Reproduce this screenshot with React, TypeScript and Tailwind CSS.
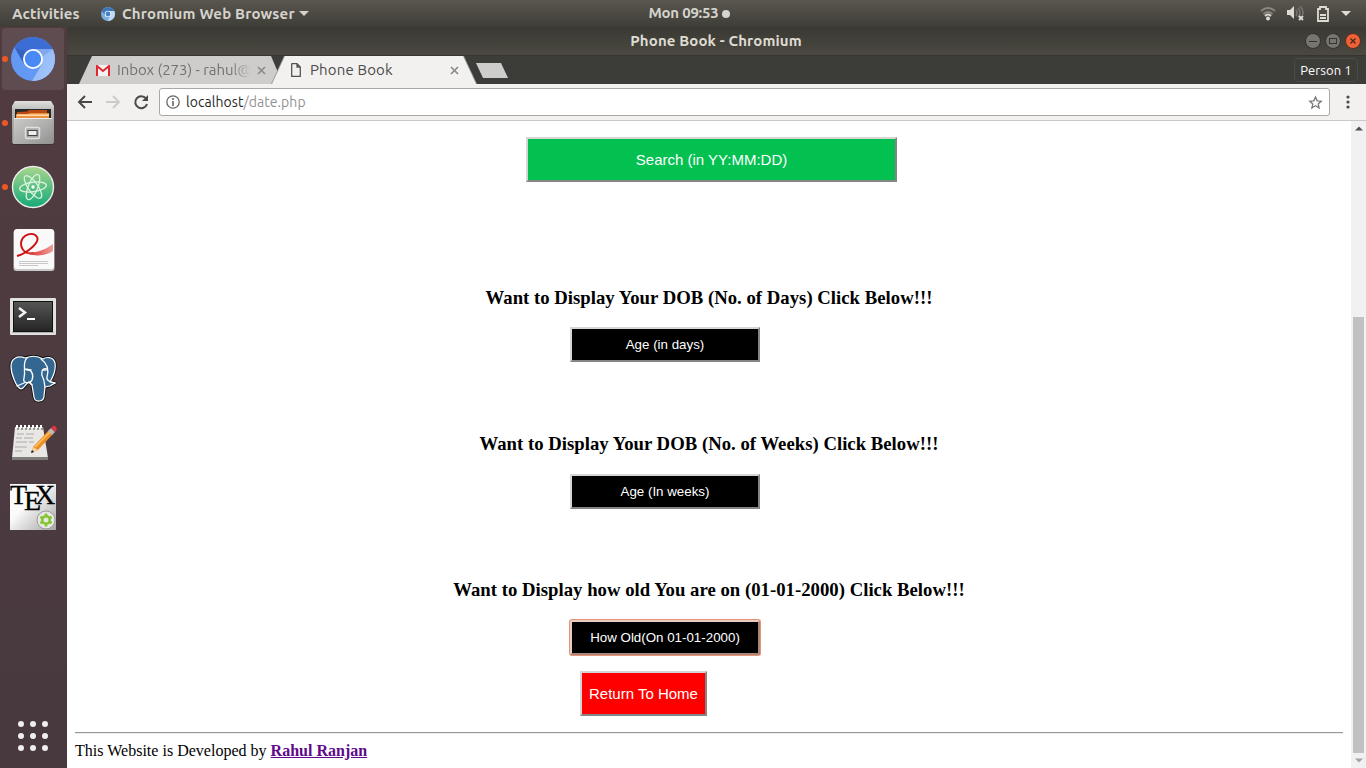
import type { ReactNode } from "react";

const uiFont = "font-['Ubuntu','Noto_Sans',sans-serif]";

function ChromiumIcon({ size }: { size: number }) {
  return (
    <svg width={size} height={size} viewBox="0 0 44 44" className="shrink-0">
      <defs>
        <clipPath id="disc"><circle cx="22" cy="22" r="22" /></clipPath>
        <linearGradient id="lightBlue" x1="0" y1="0" x2="1" y2="1">
          <stop offset="0" stopColor="#8db4f7" />
          <stop offset="1" stopColor="#a9c8fb" />
        </linearGradient>
      </defs>
      <g clipPath="url(#disc)">
        <rect width="44" height="44" fill="#6398f4" />
        <path d="M22 12H44V44H21L31 27Z" fill="url(#lightBlue)" />
        <path d="M0 0H44V12H22L13 27L3.5 10Z" fill="#3c6dd5" />
        <path d="M4 11L13 27L16 15Z" fill="#315cb7" opacity=".65" />
        <path d="M22 12H42L31 20Z" fill="#739be5" opacity=".6" />
      </g>
      <circle cx="22" cy="22" r="10" fill="white" />
      <circle cx="22" cy="22" r="8.2" fill="#4889f4" />
    </svg>
  );
}

function TopBarChromiumIcon() {
  return (
    <svg width="14" height="14" viewBox="0 0 14 14" className="shrink-0">
      <circle cx="7" cy="7" r="7" fill="#79aee0" />
      <path d="M.8 4A7 7 0 0 1 13.3 4H7L4.5 8.5Z" fill="#3d76b5" />
      <path d="M7 4H13.3A7 7 0 0 1 6.5 14L9.8 8.5Z" fill="#bdd9f3" />
      <circle cx="7" cy="7" r="3.3" fill="#e9f2fb" />
      <circle cx="7" cy="7" r="2.4" fill="#4482c4" />
    </svg>
  );
}

function FilesIcon() {
  return (
    <svg width="44" height="46" viewBox="0 0 44 46">
      <defs>
        <linearGradient id="cabinet" x1="0" y1="0" x2="0" y2="1">
          <stop offset="0" stopColor="#e1e1e0" /><stop offset=".25" stopColor="#b5b5b4" />
          <stop offset="1" stopColor="#8b8b89" />
        </linearGradient>
        <linearGradient id="drawer" x1="0" y1="0" x2="1" y2="1">
          <stop offset="0" stopColor="#cbcbc9" /><stop offset=".5" stopColor="#b0b0ae" /><stop offset="1" stopColor="#8f8f8d" />
        </linearGradient>
      </defs>
      <path d="M4 0H40L43 5V42H1V5Z" fill="url(#cabinet)" />
      <path d="M4 8H40V19H4Z" fill="#242826" />
      <path d="M6 11L16 10.5L18 9H36V19H6Z" fill="#bc4b13" />
      <path d="M5 13H17L19 12H38V19H5Z" fill="#ed9040" />
      <path d="M6 14.2H38" stroke="#ffe2b0" strokeWidth="1.5" />
      <path d="M3 17H41L42 44H2Z" fill="url(#drawer)" />
      <path d="M3 17.5H41" stroke="#ededeb" />
      <rect x="14.5" y="26.5" width="14" height="11" rx="1.5" fill="#aaa" stroke="#e2e2e1" strokeWidth="1.4" />
      <rect x="17" y="29.5" width="9" height="5" fill="#ededed" stroke="#444" />
      <path d="M2 43.5H42" stroke="#3b3235" />
    </svg>
  );
}

function AtomIcon() {
  return (
    <svg width="44" height="44" viewBox="0 0 44 44">
      <defs><linearGradient id="atom" x1="0" y1="0" x2="0" y2="1"><stop stopColor="#a8d68c" /><stop offset="1" stopColor="#14a978" /></linearGradient></defs>
      <circle cx="22" cy="22" r="20.5" fill="url(#atom)" stroke="#ededed" strokeWidth="1.4" />
      <g fill="none" stroke="#d9f3e0" strokeWidth="1.3">
        <ellipse cx="22" cy="22" rx="13.5" ry="4.8" transform="rotate(-8 22 22)" />
        <ellipse cx="22" cy="22" rx="13.5" ry="4.8" transform="rotate(55 22 22)" />
        <ellipse cx="22" cy="22" rx="13.5" ry="4.8" transform="rotate(112 22 22)" />
      </g>
      <circle cx="22" cy="22" r="1.7" fill="white" />
    </svg>
  );
}

function PdfIcon() {
  return (
    <svg width="42" height="43" viewBox="0 0 42 43">
      <defs><linearGradient id="ribbon" x1="0" x2="1"><stop stopColor="#d62525" /><stop offset="1" stopColor="#f0a09b" /></linearGradient></defs>
      <rect x=".5" y="1" width="41" height="41" rx="3" fill="#c8c8c8" />
      <rect x="1" y="0" width="40" height="40" rx="3" fill="#f9f9f9" />
      <path d="M4 27C15 24 27 13 24 8C21 2 9 5 8 14C8 21 13 26 21 24" fill="none" stroke="#ce0d10" strokeWidth="1.9" />
      <path d="M13 24C23 24 32 21 40 15V22C33 27 22 28 13 24Z" fill="url(#ribbon)" />
      <path d="M6 32.5H35M6 34.5H35M6 36.5H25" stroke="#c8c8c8" />
    </svg>
  );
}

function TerminalIcon() {
  return (
    <svg width="46" height="38" viewBox="0 0 46 38">
      <defs><linearGradient id="screen" x1="0" y1="0" x2="0" y2="1"><stop stopColor="#555" /><stop offset="1" stopColor="#252525" /></linearGradient></defs>
      <rect x="0" y="0" width="46" height="37" rx="1" fill="#e1e1e0" />
      <path d="M1 35L4 33H42L45 35" fill="#b1b1b1" />
      <rect x="3.5" y="3.5" width="39" height="30" fill="url(#screen)" stroke="#101010" />
      <path d="M9 10L15 14.5L9 19" fill="none" stroke="#f4f4f4" strokeWidth="2.5" />
      <path d="M17 21H25" stroke="white" strokeWidth="2" />
    </svg>
  );
}

function PostgresIcon() {
  return (
    <svg width="48" height="48" viewBox="0 0 48 48" strokeLinejoin="round" strokeLinecap="round">
      <path d="M16 3C8 0 2 4 2 11C2 19 7 32 12 34C15 34 18 27 20 27L23 30L25 42C26 48 35 47 35 41L36 32L41 31L46 28L41 27C44 22 47 14 46 8C44 1 37 2 34 4C27 0 22 1 16 3Z" fill="#336791" stroke="#111" strokeWidth="3" />
      <path d="M16 3C8 0 2 4 2 11C2 19 7 32 12 34C15 34 18 27 20 27L23 30L25 42C26 48 35 47 35 41L36 32L41 31L46 28L41 27C44 22 47 14 46 8C44 1 37 2 34 4C27 0 22 1 16 3Z" fill="#336791" stroke="white" strokeWidth="1.2" />
      <path d="M18 3C13 7 17 15 15 23C13 29 21 29 23 25C25 20 23 14 16 14M32 4C39 9 40 15 38 22C37 26 42 27 46 28M38 14C32 12 32 19 34 23C36 27 35 29 36 32M15 28L8 31M20 27L23 30" fill="none" stroke="white" strokeWidth="1.3" />
      <path d="M18 15H22M34 15H37" stroke="white" strokeWidth="1.5" />
    </svg>
  );
}

function EditorIcon() {
  return (
    <svg width="46" height="38" viewBox="0 0 46 38">
      <path d="M4 4H32L37 35H1Z" fill="#e8e7e3" />
      <path d="M1 34H37V37H1Z" fill="#7e7d7a" />
      <path d="M7 3V7M11 3V7M15 3V7M19 3V7M23 3V7M27 3V7M31 3V7" stroke="#4a4848" />
      <path d="M6 2V5M10 2V5M14 2V5M18 2V5M22 2V5M26 2V5M30 2V5" stroke="#fff" strokeWidth="2" />
      <path d="M6 11H13M15 11H23M5 15H11M13 15H22M5 19H16M18 19H23M4 24H16M4 28H11" stroke="#aaa" />
      <path d="M20 30L22 24L38 7L42 11L27 27Z" fill="#ed8f24" />
      <path d="M24 24L39 9" stroke="#ffc66b" strokeWidth="1.5" />
      <path d="M20 30L22 24L27 27Z" fill="#f3d2a0" />
      <path d="M20 30L21 27L23 29Z" fill="#111" />
      <path d="M37 8L40 5L44 9L41 12Z" fill="#b9b9b9" />
      <path d="M40 5L42 3C44 2 47 5 45 8L44 9Z" fill="#de3541" />
    </svg>
  );
}

function TexIcon() {
  return (
    <span className="relative block h-[46px] w-[46px] bg-linear-to-br from-[#fafafa] from-40% to-[#a5a5a5] font-['Liberation_Serif',serif] text-[28px] leading-[20px] text-black [-webkit-text-stroke:0.3px_black]">
      <span className="absolute top-px left-0">T</span>
      <span className="absolute top-[7px] left-[14px]">E</span>
      <span className="absolute top-px left-[25px]">X</span>
      <svg className="absolute right-0 bottom-0" width="20" height="22" viewBox="0 0 20 22">
        <circle cx="10" cy="12" r="9" fill="#e7e7e5" stroke="#999" />
        <circle cx="10" cy="12" r="3.7" fill="none" stroke="#83c52b" strokeWidth="2.4" />
        <path d="M10 5.5V8M10 16V18.5M4.4 8.8L6.5 10M13.5 14L15.6 15.2M4.4 15.2L6.5 14M13.5 10L15.6 8.8" stroke="#83c52b" strokeWidth="2.6" />
      </svg>
    </span>
  );
}

function DockItem({ children, active = false, running = false, offset = "" }: { children: ReactNode; active?: boolean; running?: boolean; offset?: string }) {
  return (
    <div className="relative h-16 w-[67px] shrink-0">
      {active && <div className="absolute top-[1px] left-[2px] h-[62px] w-[62px] rounded-[4px] bg-[#5f4c51]" />}
      {running && <span className="absolute top-[29px] left-[2px] h-[6px] w-[6px] rounded-full bg-[#ee5825]" />}
      <div className={`relative flex h-16 w-[66px] items-center justify-center ${offset}`}>{children}</div>
    </div>
  );
}

function CloseMark() {
  return <svg width="9" height="9" viewBox="0 0 9 9" className="shrink-0"><path d="M1 1L8 8M8 1L1 8" stroke="#8c8b89" strokeWidth="1.7" /></svg>;
}

function TopBar() {
  return (
    <div className={`flex h-[27px] shrink-0 items-center bg-linear-to-b from-[#5a574e] to-[#3e3d37] text-[#d5d3cd] ${uiFont}`}>
      <div className="grid w-full grid-cols-3 items-center text-[15px] leading-[20px] font-bold">
        <div className="flex items-center whitespace-nowrap">
          <span className="ml-3 w-[89px] tracking-[0.1px]">Activities</span>
          <TopBarChromiumIcon />
          <span className="ml-[7px] w-[173px] tracking-[0.18px]">Chromium Web Browser</span>
          <svg className="ml-[4px]" width="10" height="6" viewBox="0 0 10 6"><path d="M0 0H10L5 5Z" fill="currentColor" /></svg>
        </div>
        <div className="flex items-center justify-center pl-[13px]">
          <span className="relative -top-px tracking-[-0.25px]">Mon 09:53</span>
          <span className="ml-[4px] h-[8px] w-[8px] rounded-full bg-[#d5d3cd]" />
        </div>
        <div className="flex items-center justify-end pr-[15px]">
          <svg width="16" height="15" viewBox="0 0 16 15"><path d="M1 5Q8 -1 15 5M3.5 8Q8 4 12.5 8" fill="none" stroke="#87857e" strokeWidth="1.8" /><path d="M5 10Q8 7 11 10" fill="none" stroke="#dedbd2" strokeWidth="1.8" /><circle cx="8" cy="12.5" r="2" fill="#dedbd2" /></svg>
          <svg className="ml-[11px]" width="18" height="15" viewBox="0 0 18 15"><path d="M0 4H3L7 0V13L3 9H0Z" fill="#dedbd2" /><path d="M9 4Q11 7 9 10M11 2Q15 7 11 11M13 0Q18 6 15 9" fill="none" stroke="#77756f" strokeWidth="1.5" /><path d="M12 10L16 14M16 10L12 14" stroke="#dedbd2" strokeWidth="1.8" /></svg>
          <svg className="ml-[12px]" width="12" height="16" viewBox="0 0 12 16"><path d="M1 3H3V1H9V3H11V15H1Z" fill="none" stroke="#dedbd2" strokeWidth="1.8" /><path d="M3 9H9M3 12H9" stroke="#dedbd2" strokeWidth="1.8" /></svg>
          <svg className="ml-[12px]" width="10" height="6" viewBox="0 0 10 6"><path d="M0 0H10L5 5Z" fill="#dedbd2" /></svg>
        </div>
      </div>
    </div>
  );
}

function BrowserHeader() {
  return (
    <>
      <div className={`grid h-[28px] shrink-0 grid-cols-[1fr_auto_1fr] items-center bg-linear-to-b from-[#3a3933] to-[#4a4841] text-[#dedbd2] ${uiFont}`}>
        <span />
        <span className="-ml-px text-[15px] leading-[20px] font-bold tracking-[0.12px]">Phone Book - Chromium</span>
        <div className="flex justify-end gap-[4px] pr-[5px]">
          <svg width="16" height="16" viewBox="0 0 16 16"><circle cx="8" cy="8" r="7.5" fill="#77756e" stroke="#33322e" /><path d="M4 8.5H12" stroke="#35342f" /></svg>
          <svg width="16" height="16" viewBox="0 0 16 16"><circle cx="8" cy="8" r="7.5" fill="#77756e" stroke="#33322e" /><rect x="4.5" y="5.5" width="7" height="5" fill="none" stroke="#35342f" /></svg>
          <svg width="16" height="16" viewBox="0 0 16 16"><circle cx="8" cy="8" r="7.5" fill="#ee6035" stroke="#572d1e" /><path d="M5.5 5.5L10.5 10.5M10.5 5.5L5.5 10.5" stroke="#482a20" strokeWidth="1.4" /></svg>
        </div>
      </div>
      <div className={`flex h-[29px] shrink-0 border-t border-[#353530] bg-[#3c3d39] ${uiFont}`}>
        <div className="ml-[12px] flex h-[28px] w-[204px] items-center bg-[#cecdcb] pl-[17px] text-[15px] text-[#72716f] [clip-path:polygon(13px_0,192px_0,204px_100%,0_100%)]">
          <svg className="shrink-0" width="14" height="11" viewBox="0 0 14 11"><path d="M0 0H14V11H0Z" fill="#f2f2f2" /><path d="M1 11V1L7 6L13 1V11" fill="none" stroke="#df2930" strokeWidth="2" /></svg>
          <span className="ml-[7px] w-[134px] overflow-hidden tracking-[-0.05px] whitespace-nowrap [mask-image:linear-gradient(to_right,black_85%,transparent_100%)]">Inbox (273) - rahul@</span>
          <span className="ml-[6px] flex"><CloseMark /></span>
        </div>
        <div className="z-1 -ml-[12px] h-[28px] w-[206px] bg-[#9c9b99] [clip-path:polygon(13px_0,193px_0,206px_100%,0_100%)]">
          <div className="flex h-[28px] items-center bg-[#f2f1f0] pl-[20px] text-[15px] text-[#4c4b49] [clip-path:polygon(14px_0,192px_0,205px_100%,1px_100%)]">
            <svg width="10" height="14" viewBox="0 0 10 14"><path d="M1 .7H6L9.3 4V13.3H.7V1Z M6 1V4H9" fill="none" stroke="#555450" strokeWidth="1.3" /></svg>
            <span className="ml-[9px] w-[140px] tracking-[0.15px]">Phone Book</span>
            <CloseMark />
          </div>
        </div>
        <div className="mt-[7px] -ml-[1px] h-[15px] w-[32px] bg-[#cecdcb] [clip-path:polygon(0_0,25px_0,32px_100%,7px_100%)]" />
        <div className="mt-[2px] mr-[8px] ml-auto flex h-[24px] w-[64px] items-center justify-center rounded-[4px] border border-[#4a4a46] pt-px text-[13px] tracking-[0.1px] text-white">Person 1</div>
      </div>
      <div className={`flex h-[37px] shrink-0 items-center border-b border-[#c9c8c6] bg-[#f2f1f0] ${uiFont}`}>
        <svg className="ml-[10px]" width="16" height="14" viewBox="0 0 16 14"><path d="M15 7H2M8 1L2 7L8 13" fill="none" stroke="#4a4a49" strokeWidth="2" /></svg>
        <svg className="ml-[13px]" width="15" height="14" viewBox="0 0 15 14"><path d="M0 7H13M7 1L13 7L7 13" fill="none" stroke="#cccbc9" strokeWidth="2" /></svg>
        <svg className="ml-[12px]" width="16" height="16" viewBox="0 0 16 16"><path d="M13 4.5A6 6 0 1 0 14 10" fill="none" stroke="#4a4a49" strokeWidth="2" /><path d="M15 1V7H9Z" fill="#4a4a49" /></svg>
        <div className="ml-[10px] flex h-[28px] w-[1171px] items-center rounded-[3px] border border-[#a9a8a6] bg-white px-[6px] text-[14px] text-[#292929]">
          <svg width="14" height="14" viewBox="0 0 14 14"><circle cx="7" cy="7" r="6.2" fill="none" stroke="#656565" strokeWidth="1.3" /><path d="M7 6V11M7 3V5" stroke="#656565" strokeWidth="1.6" /></svg>
          <span className="ml-[6px] tracking-[0.07px]">localhost<span className="text-[#929292]">/date.php</span></span>
          <svg className="ml-auto" width="15" height="15" viewBox="0 0 15 15"><path d="M7.5 2L9.2 5.8L13.2 6.2L10.2 8.9L11.1 13L7.5 10.8L3.9 13L4.8 8.9L1.8 6.2L5.8 5.8Z" fill="none" stroke="#777" strokeWidth="1.3" /></svg>
        </div>
        <svg className="ml-[16px]" width="4" height="14" viewBox="0 0 4 14" fill="#4a4a49"><circle cx="2" cy="2" r="1.6" /><circle cx="2" cy="7" r="1.6" /><circle cx="2" cy="12" r="1.6" /></svg>
      </div>
    </>
  );
}

function AgeButton({ children, focused = false }: { children: string; focused?: boolean }) {
  const border = focused
    ? "rounded-[2px] border-t-[#e6cdc2] border-r-[#a98778] border-b-[#a98778] border-l-[#e6cdc2] shadow-[0_0_0_1px_#e59475]"
    : "border-t-[#d6d6d6] border-r-[#858585] border-b-[#858585] border-l-[#d6d6d6]";
  return <button className={`ml-[495px] block h-[35px] w-[190px] border-2 bg-black text-[13.333px] leading-[15px] text-white ${border}`}>{children}</button>;
}

function Heading({ children }: { children: string }) {
  return <h3 className="h-[22px] text-center font-['Liberation_Serif',serif] text-[18.72px] leading-[22px] font-bold tracking-[0.02px] text-black">{children}</h3>;
}

function Page() {
  return (
    <div className="flex min-h-0 grow bg-white">
      <main className="w-[1284px] px-[8px] pt-[16px] font-['Liberation_Sans',sans-serif]">
        <button className="ml-[451px] block h-[45px] w-[371px] border-2 border-t-[#d6d6d6] border-r-[#858585] border-b-[#858585] border-l-[#d6d6d6] bg-[#03c151] pt-[2px] text-[15px] text-white">Search (in YY:MM:DD)</button>
        <section className="mt-[105px]">
          <Heading>Want to Display Your DOB (No. of Days) Click Below!!!</Heading>
          <div className="mt-[18px]"><AgeButton>Age (in days)</AgeButton></div>
        </section>
        <section className="mt-[71px]">
          <Heading>Want to Display Your DOB (No. of Weeks) Click Below!!!</Heading>
          <div className="mt-[19px]"><AgeButton>Age (In weeks)</AgeButton></div>
        </section>
        <section className="mt-[70px]">
          <Heading>Want to Display how old You are on (01-01-2000) Click Below!!!</Heading>
          <div className="mt-[19px]"><AgeButton focused>How Old(On 01-01-2000)</AgeButton></div>
        </section>
        <button className="mt-[16px] ml-[505px] block h-[45px] w-[127px] border-2 border-t-[#d6d6d6] border-r-[#858585] border-b-[#858585] border-l-[#d6d6d6] bg-[red] pt-[2px] text-[15px] whitespace-nowrap text-white">Return To Home</button>
        <footer className="mt-[16px] border-t border-[#969696] font-['Liberation_Serif',serif] text-[16px] leading-[18px] text-black">
          <div className="border-t border-[#ededed] pt-[8px] tracking-[0.01px]">This Website is Developed by <a className="font-bold text-[#5f0a8b] underline">Rahul Ranjan</a></div>
        </footer>
      </main>
      <div className="flex w-[15px] flex-col items-center bg-[#f1f1f1]">
        <svg className="mt-[5px]" width="8" height="5" viewBox="0 0 8 5"><path d="M0 4.5L4 .5L8 4.5Z" fill="#505050" /></svg>
        <div className="mt-[186px] h-[436px] w-[11px] bg-[#c1c1c1]" />
        <svg className="mt-[5px]" width="8" height="5" viewBox="0 0 8 5"><path d="M0 .5L4 4.5L8 .5Z" fill="#a3a3a3" /></svg>
      </div>
    </div>
  );
}

export default function App() {
  return (
    <div className="flex h-[768px] w-[1366px] flex-col overflow-hidden">
      <TopBar />
      <div className="flex min-h-0 grow">
        <aside className="flex w-[67px] shrink-0 flex-col bg-linear-to-b from-[#513b40] via-[#4c3b40] to-[#47393e]">
          <DockItem active running><ChromiumIcon size={44} /></DockItem>
          <DockItem running offset="top-px"><FilesIcon /></DockItem>
          <DockItem running><AtomIcon /></DockItem>
          <DockItem offset="-top-px left-px"><PdfIcon /></DockItem>
          <DockItem offset="top-[2px]"><TerminalIcon /></DockItem>
          <DockItem><PostgresIcon /></DockItem>
          <DockItem offset="left-px -top-px"><EditorIcon /></DockItem>
          <DockItem><TexIcon /></DockItem>
          <div className="mt-auto">
            <DockItem>
              <div className="grid grid-cols-3 gap-[6px]">
                {Array.from({ length: 9 }, (_, i) => <span key={i} className="h-[6px] w-[6px] rounded-full bg-[#f0eeee]" />)}
              </div>
            </DockItem>
          </div>
        </aside>
        <div className="flex min-w-0 grow flex-col">
          <BrowserHeader />
          <Page />
        </div>
      </div>
    </div>
  );
}
